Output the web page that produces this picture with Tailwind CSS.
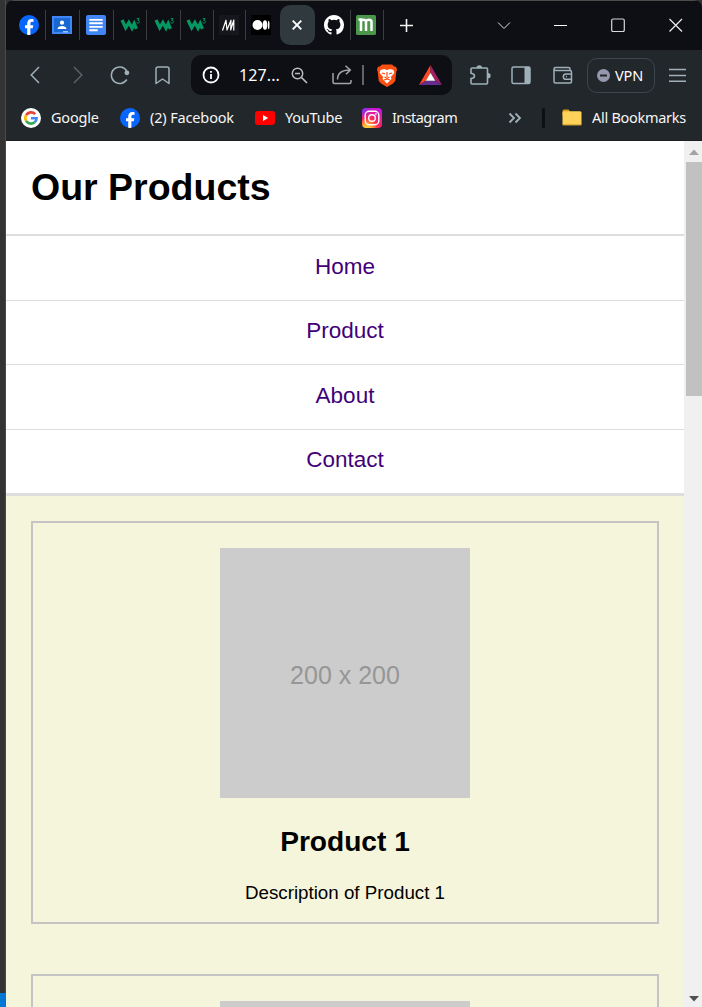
<!DOCTYPE html>
<html lang="en">
<head>
<meta charset="utf-8">
<title>Our Products</title>
<script src="https://cdn.jsdelivr.net/npm/@tailwindcss/browser@4"></script>
</head>
<body class="w-[702px] h-[1007px] overflow-hidden bg-[#333333] font-['Liberation_Sans',Arial,sans-serif]">
<svg class="hidden">
  <defs>
    <symbol id="fb" viewBox="0 0 20 20"><circle cx="10" cy="10" r="10" fill="#0866ff"/><path d="M8.2 19.8v-6.6H6v-3h2.200V8.800C8.200 5.500 9.700 4 12.600 4c.6 0 1.500.1 1.900.2v2.700l-1.100-.05c-1.500 0-2 .6-2 2v1.350h2.900l-.5 3h-2.400v6.650a10 10 0 0 1-3.200-.05z" fill="#fff"/></symbol>
    <symbol id="w3" viewBox="0 0 20 20"><path d="M2 5 5.700 12.800 8.900 7.500 12 13.200 14.200 8.500 16.400 13.800" fill="none" stroke="#059862" stroke-width="3.300"/><path d="M16.700 3.600h2.400l-1.400 1.900c1.300-.1 1.700.6 1.700 1.300 0 1.300-1.800 1.700-2.900.8" fill="none" stroke="#059862" stroke-width="1"/></symbol>
  </defs>
</svg>
<div class="flex h-full">
  <div class="flex w-[6px] shrink-0 flex-col justify-end border-r border-[#4a4a4a] bg-[#333333]"><div class="h-[14px] w-[6px] bg-[#0078d4]"></div></div>
  <div class="flex w-[696px] flex-col overflow-hidden rounded-t-lg">
    <!-- tab strip -->
    <div class="flex h-[50px] shrink-0 items-center border-t border-[#4b4b4b] bg-[#0d0f14] pb-px pl-[13px] *:shrink-0">
      <svg class="size-5"><use href="#fb"/></svg>
      <i class="ml-[6px] h-[30px] w-px bg-[#3b3c3d]"></i>
      <svg class="ml-[6px] size-5" viewBox="0 0 20 20"><path d="M0 1h20v18H0z" fill="#4285f4"/><path d="M2 3h16v14H2z" fill="#1967d2"/><circle cx="10" cy="7.700" r="2.100" fill="#fff"/><path d="M5.500 14c0-4 9-4 9 0z" fill="#fff"/><path d="M11 16h5v1.500h-5z" fill="#9cc0fa"/></svg>
      <i class="ml-[7px] h-[30px] w-px bg-[#3b3c3d]"></i>
      <svg class="ml-[6px] size-5" viewBox="0 0 20 20"><rect width="20" height="20" rx="2" fill="#4285f4"/><path d="M3.300 4.900h13.400M3.300 8.300h13.400M3.300 11.900h13.400M3.300 15.300h8.400" stroke="#fff" stroke-width="1.900"/></svg>
      <i class="ml-[7px] h-[30px] w-px bg-[#3b3c3d]"></i>
      <svg class="ml-[6px] size-5"><use href="#w3"/></svg>
      <i class="ml-[6px] h-[30px] w-px bg-[#3b3c3d]"></i>
      <svg class="ml-[7px] size-5"><use href="#w3"/></svg>
      <i class="ml-[6px] h-[30px] w-px bg-[#3b3c3d]"></i>
      <svg class="ml-[5px] size-5"><use href="#w3"/></svg>
      <i class="ml-[7px] h-[30px] w-px bg-[#3b3c3d]"></i>
      <svg class="ml-[5px] size-5" viewBox="0 0 20 20"><path d="M0 0h20v20H0z" fill="#15171c"/><path d="M3.500 15.500 7 5.200 8 15 12 5.200 11.700 15 14.800 5v10.500" fill="none" stroke="#fff" stroke-width="1.200" stroke-linejoin="round"/></svg>
      <i class="ml-[6px] h-[30px] w-px bg-[#3b3c3d]"></i>
      <svg class="ml-[5px] size-5" viewBox="0 0 20 20"><rect width="20" height="20" rx="1" fill="#000"/><circle cx="6.500" cy="10" r="5" fill="#fff"/><ellipse cx="14" cy="10" rx="2.300" ry="4.700" fill="#fff"/><ellipse cx="17.700" cy="10" rx=".8" ry="4.200" fill="#fff"/></svg>
      <div class="ml-[9px] flex h-10 w-[35px] items-center justify-center rounded-[10px] bg-[#30393e] pr-px"><svg class="size-[10px]" viewBox="0 0 10 10"><path d="m.7.7 8.600 8.600m0-8.600L.7 9.300" stroke="#fff" stroke-width="1.900"/></svg></div>
      <svg class="ml-[9px] size-5" viewBox="0 0 16 16"><path fill="#fff" d="M8 0C3.580 0 0 3.580 0 8c0 3.540 2.290 6.530 5.470 7.590.4.070.55-.17.55-.38 0-.19-.01-.82-.01-1.490-2.010.37-2.530-.49-2.690-.94-.09-.23-.48-.94-.82-1.130-.28-.15-.68-.52-.01-.53.63-.01 1.080.58 1.230.82.72 1.210 1.870.87 2.330.66.070-.52.28-.87.51-1.070-1.780-.2-3.640-.89-3.640-3.950 0-.87.31-1.590.82-2.150-.08-.2-.36-1.020.08-2.120 0 0 .67-.21 2.200.82a7.600 7.600 0 0 1 4 0c1.530-1.040 2.200-.82 2.200-.82.44 1.100.16 1.920.08 2.120.51.56.82 1.270.82 2.150 0 3.070-1.870 3.750-3.650 3.950.29.25.54.73.54 1.480 0 1.070-.01 1.930-.01 2.200 0 .21.15.46.55.38A8.010 8.010 0 0 0 16 8c0-4.420-3.580-8-8-8z"/></svg>
      <i class="ml-[6px] h-[30px] w-px bg-[#3b3c3d]"></i>
      <svg class="ml-[5px] size-5" viewBox="0 0 20 20"><rect width="20" height="20" rx="1.500" fill="#4b964b"/><path d="M2.500 4.500H5V16M5 6c1-1.500 4.500-2 5 .5V16M10 6c1-1.500 5-2 5.500.5V16" fill="none" stroke="#fff" stroke-width="2.500"/></svg>
      <i class="ml-[7px] h-[30px] w-px bg-[#3b3c3d]"></i>
      <svg class="ml-[16px] size-[13px]" viewBox="0 0 13 13"><path d="M6.500 0v13M0 6.500h13" stroke="#f3f3f3" stroke-width="1.600"/></svg>
      <svg class="ml-[84px] h-[14px] w-[14px]" viewBox="0 0 14 14"><path d="m1 4.500 6 6 6-6" fill="none" stroke="#e0e0e0" stroke-width="1"/></svg>
      <svg class="ml-[43px] size-[14px]" viewBox="0 0 14 14"><path d="M0 7.500h13" stroke="#fff"/></svg>
      <svg class="ml-[43px] size-[14px]" viewBox="0 0 14 14"><rect x=".7" y="1" width="12.600" height="12.600" rx="1.500" fill="none" stroke="#d8d8d8" stroke-width="1.200"/></svg>
      <svg class="ml-[44px] size-[14px]" viewBox="0 0 14 14"><path d="m.5 1 12.500 12.500M13 1 .5 13.500" stroke="#eee" stroke-width="1.200"/></svg>
    </div>
    <!-- toolbar -->
    <div class="flex h-[50px] shrink-0 items-center bg-[#22272b] pl-[24px] font-['Noto_Sans','Open_Sans',sans-serif] *:shrink-0">
      <svg class="h-[18px] w-[10px]" viewBox="0 0 10 18"><path d="M9 1 1.200 9 9 17" fill="none" stroke="#9fb0b8" stroke-width="1.500"/></svg>
      <svg class="ml-[33px] h-[18px] w-[10px]" viewBox="0 0 10 18"><path d="m1 1 7.800 8L1 17" fill="none" stroke="#596267" stroke-width="1.500"/></svg>
      <svg class="ml-[27px] size-5" viewBox="0 0 20 20"><path d="M16.800 6A8.300 8.300 0 1 0 16.800 14.500" fill="none" stroke="#9fb0b8" stroke-width="1.500"/><circle cx="16.900" cy="7.800" r="2.400" fill="#9fb0b8"/></svg>
      <svg class="ml-[25px] h-[19px] w-[15px]" viewBox="0 0 15 19"><path d="M1 3a2 2 0 0 1 2-2h9a2 2 0 0 1 2 2v14.500l-6.500-4.500L1 17.500z" fill="none" stroke="#9fb0b8" stroke-width="1.500" stroke-linejoin="round"/></svg>
      <div class="ml-[21px] flex h-10 w-[261px] items-center rounded-[10px] bg-[#0d0f14] pl-[11px] *:shrink-0">
        <svg class="size-[18px]" viewBox="0 0 18 18"><circle cx="9" cy="9" r="7.500" fill="none" stroke="#fff" stroke-width="1.800"/><path d="M9 8v5M9 5v1.700" stroke="#fff" stroke-width="1.800"/></svg>
        <span class="ml-[19px] w-[42px] whitespace-nowrap text-[16px] leading-5 tracking-[0.1px] text-white">127...</span>
        <svg class="ml-[10px] size-[17px]" viewBox="0 0 17 17"><circle cx="6.500" cy="6.500" r="5.200" fill="none" stroke="#b9bbbc" stroke-width="1.500"/><path d="M4 6.500h5M10.500 10.500l5.500 5.500" stroke="#b9bbbc" stroke-width="1.700"/></svg>
        <svg class="ml-[24px] h-[20px] w-[20px]" viewBox="0 0 20 20"><path d="M1 8v9a1.500 1.500 0 0 0 1.500 1.500h15A1.500 1.500 0 0 0 19 17v-2M5.500 14.500C5.500 8 9.500 5 18 5M13.500.800 18.300 5l-4.300 4.200" fill="none" stroke="#a2a4a6" stroke-width="1.500"/></svg>
        <i class="ml-[10px] h-5 w-[2px] bg-[#636466]"></i>
        <svg class="ml-[13px] h-[23px] w-[20px]" viewBox="0 0 20 23"><path d="M5 .5h10l2.200 2 1.800.3 1 3-.7 2-1 9-2.300 2.800L10 23l-6-3.400-2.300-2.800-1-9-.7-2 1-3 1.800-.3z" fill="#fb4f12"/><path d="M3.500 6 7 5l3 1 3-1 3.500 1 .8 3-3.500 4 .7 2-4.500 4.500L5.500 15l.7-2-3.500-4z" fill="#fff"/><path d="m4.800 9 3.200.8M15.200 9l-3.200.8M10 8v5M7.500 13l2.500 1.500 2.500-1.500M7 16l3-1 3 1" fill="none" stroke="#fb4f12" stroke-width="1.200"/></svg>
        <svg class="ml-[22px] h-[20px] w-[23px]" viewBox="0 0 23 20"><path d="M11.500 0 0 20l7-4.200 4.500-8z" fill="#ff4724"/><path d="M11.500 0 23 20l-7-4.200-4.500-8z" fill="#9e1f63"/><path d="M0 20h23l-7-4.200H7z" fill="#662d91"/><path d="m11.500 7.800 4.700 8H6.800z" fill="#fff"/></svg>
      </div>
      <svg class="ml-[18px] size-[21px]" viewBox="0 0 21 21"><path d="M1 4q0-1 1-1h14.500q1 0 1 1v14q0 1-1 1H2q-1 0-1-1v-4.500q3.500-.5 3.500-2.600T1 8.300z" fill="none" stroke="#9fb0b8" stroke-width="1.600"/><path d="M6.500 3a2.800 2.800 0 0 1 5.600 0zM18 8a2.600 2.600 0 0 1 0 5.300z" fill="#9fb0b8"/></svg>
      <svg class="ml-[20px] size-[20px]" viewBox="0 0 20 20"><rect x="1" y="2" width="18" height="16.500" rx="1.500" fill="none" stroke="#9fb0b8" stroke-width="1.500"/><path d="M13.500 2H19v16.500h-5.500z" fill="#9fb0b8"/></svg>
      <svg class="ml-[22px] size-[20px]" viewBox="0 0 20 20"><path d="M17 5.500V4q0-1.500-1.500-1.500H2.500Q1 2.500 1 4v12.500Q1 18 2.500 18H17q1.500 0 1.500-1.500V7q0-1.500-1.500-1.500H3Q1 5.500 1 4M18.500 9H13a2.500 2.500 0 0 0 0 5.300h5.500M13 11.500h1" fill="none" stroke="#9fb0b8" stroke-width="1.500"/></svg>
      <div class="ml-[14px] flex h-[35px] w-[68px] items-center rounded-[10px] border border-[#3b474d] pl-[9px]"><svg class="size-[13px] shrink-0" viewBox="0 0 13 13"><circle cx="6.500" cy="6.500" r="6.500" fill="#9797ae"/><path d="M3 6.500h7" stroke="#22272b" stroke-width="1.800"/></svg><span class="ml-[5px] text-[14.500px] leading-5 tracking-[-0.1px] text-white">VPN</span></div>
      <svg class="ml-[14px] h-[14px] w-[17px]" viewBox="0 0 17 14"><path d="M0 1.500h17M0 7.500h17M0 13.300h17" stroke="#9fb0b8" stroke-width="1.400"/></svg>
    </div>
    <!-- bookmarks -->
    <div class="flex h-[41px] shrink-0 items-center whitespace-nowrap border-b border-[#1b1f23] bg-[#22272b] pb-[5px] pl-[15px] font-['Noto_Sans','Open_Sans',sans-serif] text-[14.500px] leading-5 text-[#f5f5f5] *:shrink-0">
      <svg class="size-5" viewBox="0 0 20 20"><circle cx="10" cy="10" r="10" fill="#fff"/><g fill="none" stroke-width="2.600"><path d="M14.200 6.200A5.700 5.700 0 0 0 5.100 7.200" stroke="#ea4335"/><path d="M5.100 7.200a5.700 5.700 0 0 0 0 5.700" stroke="#fbbc05"/><path d="M5.100 12.900a5.700 5.700 0 0 0 8.500 1.400" stroke="#34a853"/><path d="M13.600 14.300q2-1.600 2-4H10" stroke="#4285f4"/></g></svg>
      <span class="ml-[10px] w-[59px] pb-[2px] tracking-[-0.200px]">Google</span>
      <svg class="ml-[10px] size-5"><use href="#fb"/></svg>
      <span class="ml-[10px] w-[95px] pb-[2px] tracking-[-0.150px]">(2) Facebook</span>
      <svg class="ml-[10px] h-[20px] w-[20px]" viewBox="0 0 20 20"><rect y="3" width="20" height="14" rx="3" fill="#f00"/><path d="m8 7 5.200 3L8 13z" fill="#fff"/></svg>
      <span class="ml-[10px] w-[67px] pb-[2px] tracking-[-0.200px]">YouTube</span>
      <svg class="ml-[10px] size-5" viewBox="0 0 20 20"><defs><radialGradient id="ig" cx=".25" cy="1.050" r="1.100"><stop offset="0" stop-color="#fd5"/><stop offset=".2" stop-color="#ffb52b"/><stop offset=".5" stop-color="#ff2a55"/><stop offset="1" stop-color="#c913d8"/></radialGradient><radialGradient id="ig2" cx="0" cy="0" r=".6"><stop offset="0" stop-color="#5b3cff"/><stop offset="1" stop-color="#b620e0" stop-opacity="0"/></radialGradient></defs><rect width="20" height="20" rx="4" fill="url(#ig)"/><rect width="20" height="20" rx="4" fill="url(#ig2)"/><rect x="3.200" y="3.200" width="13.600" height="13.600" rx="4" fill="none" stroke="#fff" stroke-width="1.400"/><circle cx="10" cy="10" r="3.300" fill="none" stroke="#fff" stroke-width="1.400"/><circle cx="13.900" cy="6.100" r=".9" fill="#fff"/></svg>
      <span class="ml-[10px] w-[75px] pb-[2px] tracking-[-0.600px]">Instagram</span>
      <svg class="ml-[41px] h-[12px] w-[14px]" viewBox="0 0 14 12"><path d="m1.500 1.500 4.500 4.500-4.500 4.500M7.500 1.500 12 6l-4.500 4.500" fill="none" stroke="#9fb0b8" stroke-width="1.800"/></svg>
      <i class="ml-[20px] h-5 w-[3px] rounded bg-[#0d0f14]"></i>
      <svg class="ml-[17px] h-[17px] w-[20px]" viewBox="0 0 20 17"><path d="M.5 2q0-1.500 1.500-1.500h4.500L8 2.500V6H.5z" fill="#d99a13"/><rect x=".5" y="2.200" width="19" height="14" rx="1.500" fill="#ffd35a"/><path d="M.5 15.700h19" stroke="#e2a52a"/></svg>
      <span class="ml-[10px] pb-[2px] tracking-[-0.280px]">All Bookmarks</span>
    </div>
    <!-- viewport -->
    <div class="flex min-h-0 flex-1">
      <main class="w-[678px] overflow-hidden bg-[#f5f5dc] text-center text-black">
        <h1 class="h-[93px] bg-white pl-[25px] pt-[24px] text-left text-[37.500px] font-bold leading-[44px]">Our Products</h1>
        <nav class="flex flex-col border-b-[3px] border-t-2 border-[#dddddd] bg-white text-[22.500px] leading-[26px] text-[#420078]">
          <a class="h-[65px] border-b border-[#dddddd] pt-[18px]">Home</a>
          <a class="h-[64px] border-b border-[#dddddd] pt-[17px]">Product</a>
          <a class="h-[65px] border-b border-[#dddddd] pt-[18px]">About</a>
          <a class="h-[63px] pt-[17px]">Contact</a>
        </nav>
        <section class="flex flex-col gap-[50px] px-[25px] pt-[25px]">
          <article class="flex h-[403px] flex-col items-center border-2 border-[#c4c4c4] pt-[25px]">
            <div class="flex size-[250px] shrink-0 items-center justify-center bg-[#cccccc] pt-[5px] text-[25px] text-[#969696]">200 x 200</div>
            <h2 class="mt-[28px] text-[28.125px] font-bold leading-[32px]">Product 1</h2>
            <p class="mt-[24px] text-[18.750px] leading-[21px]">Description of Product 1</p>
          </article>
          <article class="flex h-[403px] shrink-0 flex-col items-center border-2 border-[#c4c4c4] pt-[25px]">
            <div class="size-[250px] shrink-0 bg-[#cccccc]"></div>
          </article>
        </section>
      </main>
      <div class="flex w-[18px] flex-col items-center bg-[#f0f0f0] pl-[2px]">
        <svg class="mt-[8px] h-[6px] w-[10px] shrink-0" viewBox="0 0 10 6"><path d="M5 .5 10 6H0z" fill="#a3a3a3"/></svg>
        <div class="mt-[7px] h-[234px] w-full shrink-0 bg-[#c1c1c1]"></div>
        <svg class="mb-[5px] mt-auto h-[6px] w-[10px] shrink-0" viewBox="0 0 10 6"><path d="M0 0h10L5 5.500z" fill="#505050"/></svg>
      </div>
    </div>
  </div>
</div>
</body>
</html>
